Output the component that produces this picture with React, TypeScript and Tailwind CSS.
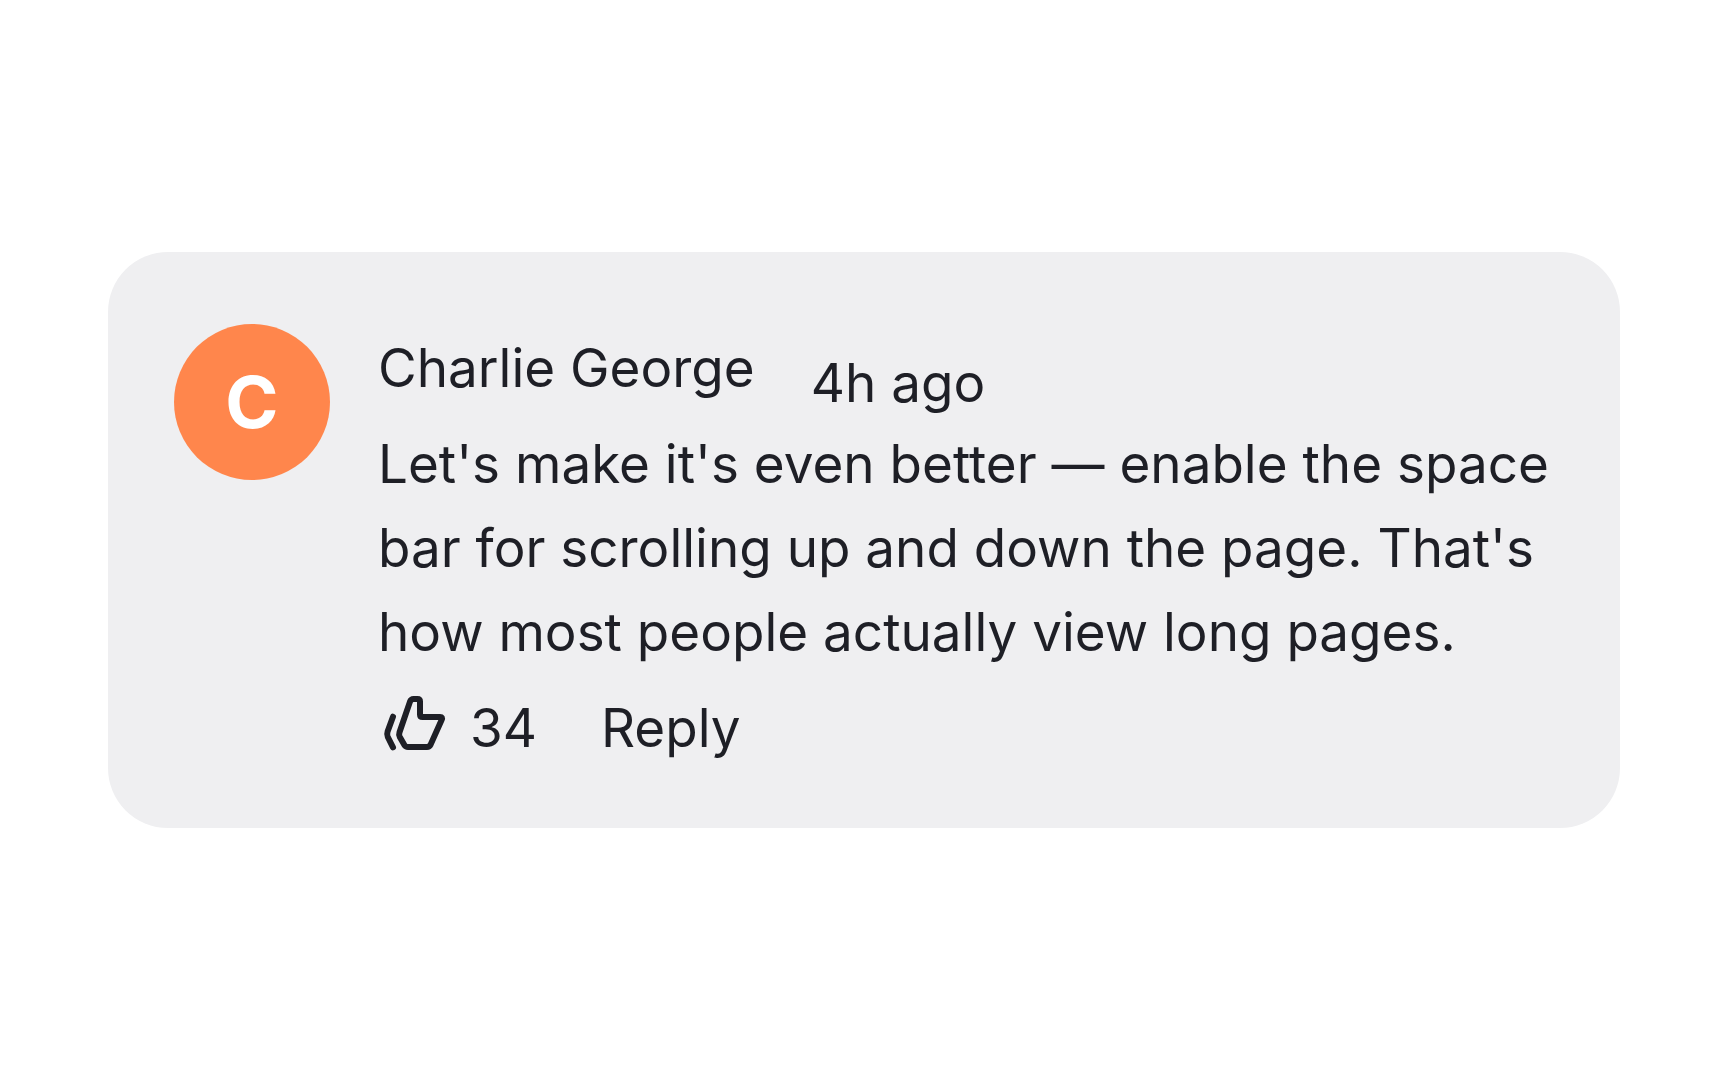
function ThumbsUp() {
  return (
    <svg
      viewBox="-6 -4 72 72"
      className="size-[72px] shrink-0"
      fill="none"
      stroke="currentColor"
      strokeWidth="6"
      strokeLinecap="round"
      strokeLinejoin="round"
      aria-hidden="true"
    >
      <path d="M9 20.7L3.6 35.5Q2.6 38.3 3.8 41L9 51.3" />
      <path d="M29.5 3H33.5Q36 3 36 5.5V18.5Q36 21 38.5 21H56Q59 21 57.6 24L46.6 48.6Q45.4 51 43 51H24Q21.6 51 20.4 49L15.8 41Q14.6 38.8 15.5 36.2L26 5.6Q27 3 29.5 3Z" />
    </svg>
  );
}

export default function App() {
  return (
    <main className="flex min-h-screen items-center bg-white px-[108px] font-['Inter',sans-serif] text-[53px] text-[#1e1f26]">
      <article className="flex w-full gap-12 rounded-[60px] bg-[#efeff1] pt-[72px] pr-[66px] pb-[58px] pl-[66px]">
        <div className="flex size-[156px] shrink-0 items-center justify-center rounded-full bg-[#ff864c] text-[72px] font-bold text-white">
          C
        </div>
        <div className="min-w-0 flex-1">
          <header className="flex items-start gap-14 pt-[14px] leading-[60px]">
            <h2>Charlie George</h2>
            <time className="pt-[15px]">4h ago</time>
          </header>
          <p className="mt-[9px] leading-[84px]">
            Let's make it's even better — enable the space bar for scrolling up and down the page. That's how most people actually view long pages.
          </p>
          <footer className="mt-3 flex items-center gap-16 leading-[84px]">
            <button type="button" aria-label="Like, 34" className="flex items-center gap-5">
              <ThumbsUp />
              34
            </button>
            <button type="button">Reply</button>
          </footer>
        </div>
      </article>
    </main>
  );
}
